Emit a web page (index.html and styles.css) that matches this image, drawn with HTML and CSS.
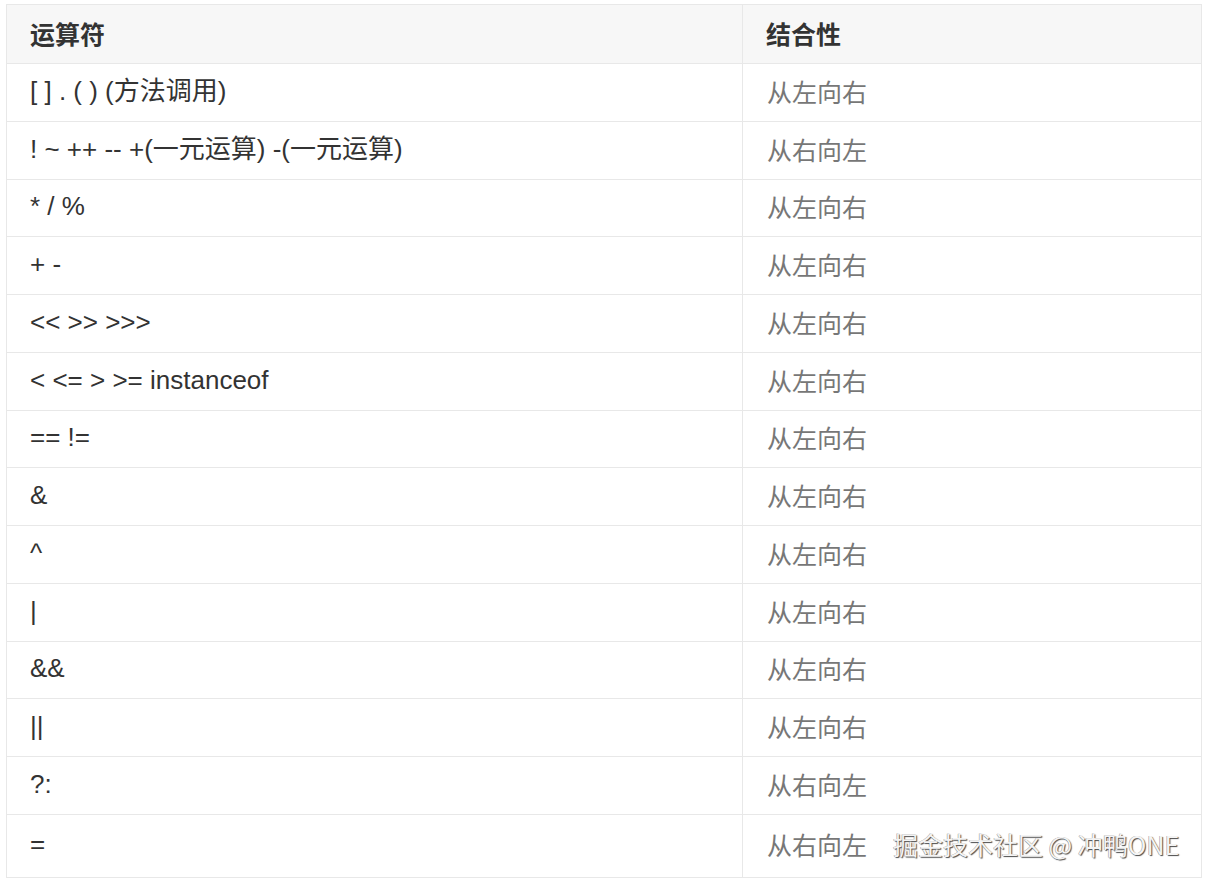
FILE: index.html
```html
<!DOCTYPE html>
<html lang="zh-CN">
<head>
<meta charset="utf-8">
<title>运算符结合性</title>
<link rel="stylesheet" href="styles.css">
</head>
<body>
<div class="page">
  <table class="ops">
    <thead>
      <tr><th class="c1">运算符</th><th class="c2">结合性</th></tr>
    </thead>
    <tbody>
      <tr><td>[ ] . ( ) (方法调用)</td><td class="dir">从左向右</td></tr>
      <tr><td>! ~ ++ -- +(一元运算) -(一元运算)</td><td class="dir">从右向左</td></tr>
      <tr><td>* / %</td><td class="dir">从左向右</td></tr>
      <tr><td>+ -</td><td class="dir">从左向右</td></tr>
      <tr><td>&lt;&lt; &gt;&gt; &gt;&gt;&gt;</td><td class="dir">从左向右</td></tr>
      <tr><td>&lt; &lt;= &gt; &gt;= instanceof</td><td class="dir">从左向右</td></tr>
      <tr><td>== !=</td><td class="dir">从左向右</td></tr>
      <tr><td>&amp;</td><td class="dir">从左向右</td></tr>
      <tr><td>^</td><td class="dir">从左向右</td></tr>
      <tr><td>|</td><td class="dir">从左向右</td></tr>
      <tr><td>&amp;&amp;</td><td class="dir">从左向右</td></tr>
      <tr><td>||</td><td class="dir">从左向右</td></tr>
      <tr><td>?:</td><td class="dir">从右向左</td></tr>
      <tr class="last"><td>=</td><td class="dir">从右向左</td></tr>
    </tbody>
  </table>
  <div class="watermark">掘金技术社区 @ 冲鸭ONE</div>
</div>
</body>
</html>
```

FILE: styles.css
```css
html, body {
  margin: 0;
  padding: 0;
  background: #ffffff;
}

.page {
  position: relative;
  padding: 4px 4px 0 6px;
  font-family: "Liberation Sans", Arial, "Noto Sans CJK SC", sans-serif;
}

.ops {
  width: 1196px;
  border-collapse: collapse;
  table-layout: fixed;
  border: 1px solid #e3e3e3;
}

.ops th,
.ops td {
  height: 53.75px;
  padding: 0 0 3px 23px;
  line-height: 30px;
  text-align: left;
  vertical-align: middle;
  border: 1px solid #e8e8e8;
  font-size: 26px;
  color: #333333;
  white-space: nowrap;
}

.ops th {
  height: 55px;
  background: #f7f7f7;
  font-weight: bold;
  font-family: "Noto Sans CJK SC", sans-serif;
  font-size: 25px;
  color: #333333;
}

.ops .c1 {
  width: 712px;
}

.ops td.dir {
  padding-left: 24px;
  font-family: "Noto Sans CJK SC", sans-serif;
  font-size: 25px;
  color: #777777;
}

.ops tr.last td {
  height: 59px;
}

.watermark {
  position: absolute;
  left: 893px;
  top: 826px;
  font-family: "Noto Sans CJK SC", sans-serif;
  font-size: 25px;
  color: #f4f4f4;
  text-shadow: 1px 1px 1px #4a4a4a, -0.5px -0.5px 0 #9a9a9a;
}
```
